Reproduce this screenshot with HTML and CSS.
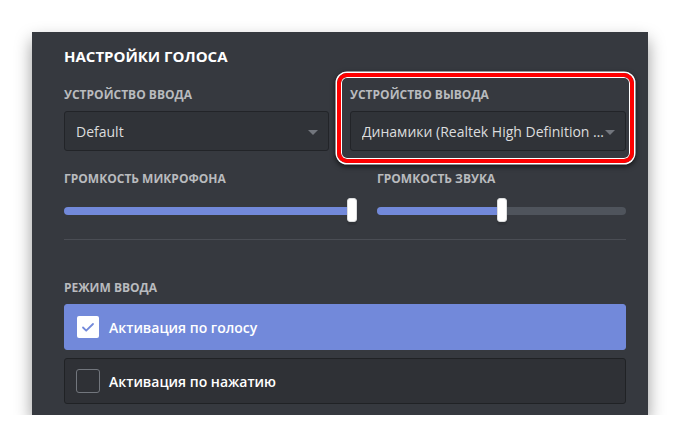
FILE: index.html
```html
<!DOCTYPE html>
<html lang="ru">
<head>
  <meta charset="UTF-8">
  <title>Настройки голоса</title>
  <link rel="stylesheet" href="styles.css">
</head>
<body>
  <div class="panel">
    <h2 class="title">Настройки голоса</h2>

    <div class="devices">
      <div class="field">
        <div class="label">Устройство ввода</div>
        <div class="select">
          <span class="select-value">Default</span>
          <span class="caret"></span>
        </div>
      </div>
      <div class="field">
        <div class="label">Устройство вывода</div>
        <div class="select">
          <span class="select-value">Динамики (Realtek High Definition Audio)</span>
          <span class="caret"></span>
        </div>
      </div>
    </div>

    <div class="volumes">
      <div class="field">
        <div class="label">Громкость микрофона</div>
        <div class="slider">
          <div class="track"><div class="fill" style="width: 100%"></div></div>
          <div class="handle" style="left: calc(100% - 5px)"></div>
        </div>
      </div>
      <div class="field">
        <div class="label">Громкость звука</div>
        <div class="slider">
          <div class="track"><div class="fill" style="width: 50%"></div></div>
          <div class="handle" style="left: calc(50% - 5px)"></div>
        </div>
      </div>
    </div>

    <div class="divider"></div>

    <div class="label mode-label">Режим ввода</div>
    <div class="option selected">
      <span class="checkbox">
        <svg width="22" height="22" viewBox="0 0 22 22"><path d="M6 11.5l3.2 3.2L16 8" fill="none" stroke="#7289da" stroke-width="1.8" stroke-linecap="round" stroke-linejoin="round"/></svg>
      </span>
      <span class="option-text">Активация по голосу</span>
    </div>
    <div class="option">
      <span class="checkbox"></span>
      <span class="option-text">Активация по нажатию</span>
    </div>
  </div>

  <div class="highlight"></div>
</body>
</html>
```

FILE: styles.css
```css
body {
  margin: 0;
  padding: 32px 0 0 32px;
  background: #ffffff;
  font-family: "Open Sans", "Noto Sans", sans-serif;
}
.panel {
  width: 616px;
  height: 383px;
  box-sizing: border-box;
  padding: 14px 22px 0 32px;
  background: #36393f;
  box-shadow: 0 8px 16px rgba(0, 0, 0, 0.4);
}
.title {
  margin: 0;
  font-size: 15px;
  line-height: 20px;
  font-weight: 700;
  color: #ffffff;
  text-transform: uppercase;
}
.label {
  font-size: 12px;
  line-height: 16px;
  font-weight: 700;
  color: #b9bbbe;
  text-transform: uppercase;
  margin-bottom: 8px;
}
.devices {
  display: grid;
  grid-template-columns: 265px 276px;
  column-gap: 21px;
  margin-top: 21px;
}
.select {
  position: relative;
  height: 40px;
  box-sizing: border-box;
  padding: 0 20px 0 11px;
  display: flex;
  align-items: center;
  background: #303338;
  border: 1px solid #222428;
  border-radius: 3px;
}
.select-value {
  font-size: 14px;
  color: #dcddde;
  white-space: nowrap;
  overflow: hidden;
  text-overflow: ellipsis;
}
.caret {
  position: absolute;
  right: 10px;
  top: 18px;
  width: 0;
  height: 0;
  border-left: 5px solid transparent;
  border-right: 5px solid transparent;
  border-top: 5px solid #72767d;
}
.volumes {
  display: grid;
  grid-template-columns: 288px 249px;
  column-gap: 25px;
  margin-top: 20px;
}
.volumes .label {
  margin-bottom: 11px;
}
.slider {
  position: relative;
  height: 24px;
  box-sizing: border-box;
  padding-top: 9px;
}
.track {
  height: 8px;
  border-radius: 4px;
  background: #4f545c;
  overflow: hidden;
}
.fill {
  height: 100%;
  background: #7289da;
}
.handle {
  position: absolute;
  top: 0;
  width: 10px;
  height: 24px;
  box-sizing: border-box;
  background: #ffffff;
  border: 1px solid #dcddde;
  border-radius: 3px;
  box-shadow: 0 3px 1px rgba(0, 0, 0, 0.1);
}
.divider {
  height: 1px;
  background: #4a4d54;
  margin-top: 17px;
}
.mode-label {
  margin-top: 40px;
}
.option {
  display: flex;
  align-items: center;
  height: 46px;
  box-sizing: border-box;
  padding-left: 11px;
  margin-bottom: 8px;
  background: #2f3136;
  border: 1px solid #202225;
  border-radius: 3px;
}
.option.selected {
  background: #7289da;
  border-color: #7289da;
}
.checkbox {
  width: 24px;
  height: 24px;
  box-sizing: border-box;
  border: 1px solid #72767d;
  border-radius: 3px;
}
.option.selected .checkbox {
  border-color: transparent;
  background: #ffffff;
  background-clip: padding-box;
}
.checkbox svg {
  display: block;
}
.option-text {
  margin-left: 9px;
  font-size: 14px;
  font-weight: 600;
  color: #ffffff;
}
.highlight {
  position: absolute;
  left: 337px;
  top: 73px;
  width: 297px;
  height: 90px;
  box-sizing: border-box;
  border: 4px solid #ff0000;
  border-radius: 10px;
  box-shadow: 0 0 0 1.5px #ffffff, inset 0 0 0 1px #ffffff, 0 2px 5px 2px rgba(0, 0, 0, 0.55);
}
```
